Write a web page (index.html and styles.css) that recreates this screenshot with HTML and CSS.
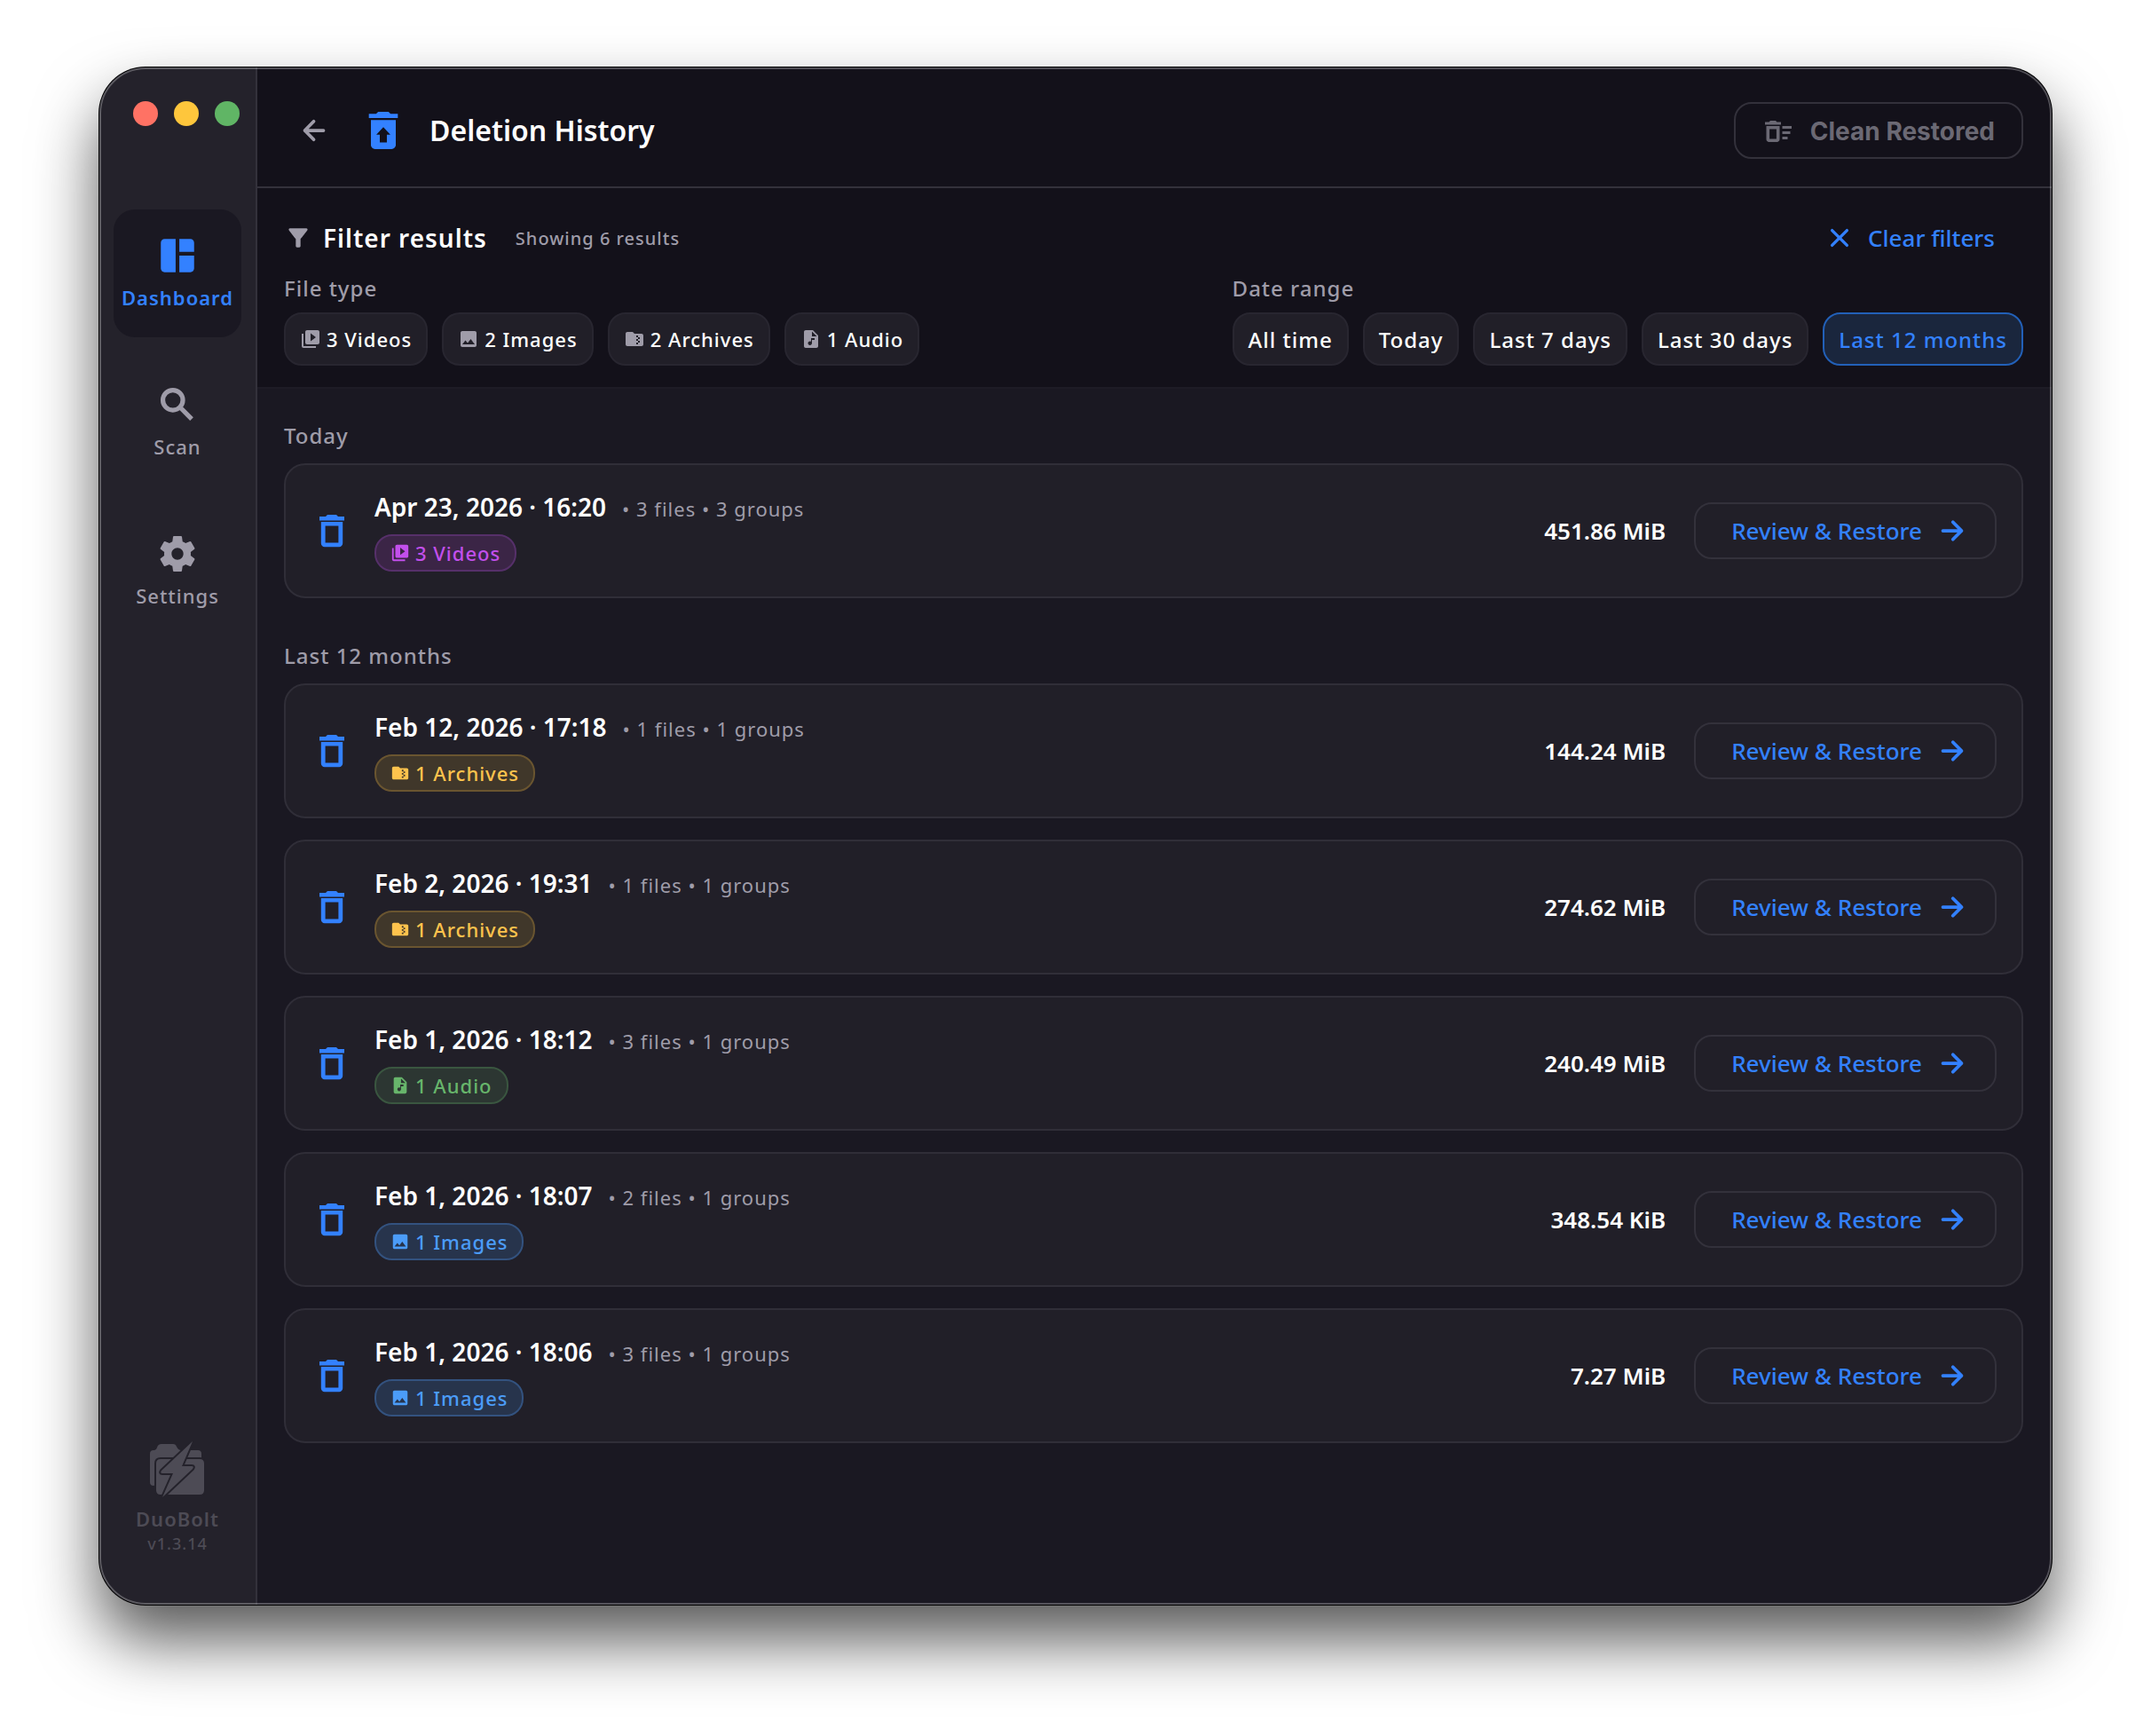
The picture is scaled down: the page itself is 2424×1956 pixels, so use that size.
FILE: index.html
```html
<!DOCTYPE html>
<html lang="en">
<head>
<meta charset="utf-8">
<title>DuoBolt – Deletion History</title>
<link rel="stylesheet" href="styles.css">
</head>
<body>
<svg class="sprite" aria-hidden="true">
  <symbol id="i-dashboard" viewBox="0 0 24 24"><path d="M11 21H5c-1.1 0-2-.9-2-2V5c0-1.1.9-2 2-2h6v18zm2 0h6c1.1 0 2-.9 2-2v-7h-8v9zm8-11V5c0-1.1-.9-2-2-2h-6v7h8z"/></symbol>
  <symbol id="i-search" viewBox="0 0 24 24"><g fill="none" stroke="currentColor" stroke-width="2.5"><circle cx="9.500" cy="9.500" r="5.400"/><path d="M13.800 13.800l5.900 5.900"/></g></symbol>
  <symbol id="i-settings" viewBox="0 0 24 24"><path d="M19.14 12.94c.04-.3.06-.61.06-.94 0-.32-.02-.64-.07-.94l2.03-1.58c.18-.14.23-.41.12-.61l-1.92-3.32c-.12-.22-.37-.29-.59-.22l-2.39.96c-.5-.38-1.03-.7-1.62-.94l-.36-2.54c-.04-.24-.24-.41-.48-.41h-3.84c-.24 0-.43.17-.47.41l-.36 2.54c-.59.24-1.13.57-1.62.94l-2.39-.96c-.22-.08-.47 0-.59.22L2.74 8.87c-.12.21-.08.47.12.61l2.03 1.58c-.05.3-.09.63-.09.94s.02.64.07.94l-2.03 1.58c-.18.14-.23.41-.12.61l1.92 3.32c.12.22.37.29.59.22l2.39-.96c.5.38 1.03.7 1.62.94l.36 2.54c.05.24.24.41.48.41h3.84c.24 0 .44-.17.47-.41l.36-2.54c.59-.24 1.13-.56 1.62-.94l2.39.96c.22.08.47 0 .59-.22l1.92-3.32c.12-.22.07-.47-.12-.61l-2.01-1.58zM12 15.2c-1.77 0-3.2-1.43-3.2-3.2s1.43-3.2 3.2-3.2 3.2 1.43 3.2 3.2-1.43 3.2-3.2 3.2z"/></symbol>
  <symbol id="i-trash" viewBox="0 0 24 24"><path d="M15.700 9.300v9.400H8.300V9.300h7.400M14.500 3h-5l-1 1H5v2.200h14V4h-3.500l-1-1zM18.100 7H5.900v12.100c0 1.1.9 2 2 2h8.200c1.1 0 2-.9 2-2V7z"/></symbol>
  <symbol id="i-restore" viewBox="0 0 24 24"><path d="M19 4h-3.500l-1-1h-5l-1 1H5v2h14V4zM6 7v12c0 1.1.9 2 2 2h8c1.1 0 2-.9 2-2V7H6zm7.700 7v3.800h-3.400V14H8.600l3.400-3.600 3.400 3.600h-1.700z"/></symbol>
  <symbol id="i-sweep" viewBox="0 0 24 24"><path d="M15 16h4v2h-4zm0-8h7v2h-7zm0 4h6v2h-6zM3 18c0 1.1.9 2 2 2h6c1.1 0 2-.9 2-2V8H3v10zm2.400-7.600h5.200v7.200H5.400v-7.200zM10 4H6L5 5H2v2h12V5h-3z"/></symbol>
  <symbol id="i-filter" viewBox="0 0 24 24"><path d="M4.25 5.61C6.27 8.2 10 13 10 13v6c0 .55.45 1 1 1h2c.55 0 1-.45 1-1v-6s3.72-4.8 5.74-7.39A.998.998 0 0 0 18.95 4H5.04c-.83 0-1.3.95-.79 1.61z"/></symbol>
  <symbol id="i-video" viewBox="0 0 24 24"><path d="M4 6H2v14c0 1.1.9 2 2 2h14v-2H4V6zm16-4H8c-1.1 0-2 .9-2 2v12c0 1.1.9 2 2 2h12c1.1 0 2-.9 2-2V4c0-1.1-.9-2-2-2zm-8 12.5v-9l6 4.5-6 4.5z"/></symbol>
  <symbol id="i-image" viewBox="0 0 24 24"><path d="M21 19V5c0-1.1-.9-2-2-2H5c-1.1 0-2 .9-2 2v14c0 1.1.9 2 2 2h14c1.1 0 2-.9 2-2zM8.5 13.5l2.5 3.01L14.5 12l4.5 6H5l3.5-4.5z"/></symbol>
  <symbol id="i-archive" viewBox="0 0 24 24"><path d="M20 6h-8l-2-2H4c-1.1 0-1.99.9-1.99 2L2 18c0 1.1.9 2 2 2h16c1.1 0 2-.9 2-2V8c0-1.1-.9-2-2-2zm-2 6h-2v2h2v2h-2v2h-2v-2h2v-2h-2v-2h2v-2h-2V8h2v2h2v2z"/></symbol>
  <symbol id="i-audio" viewBox="0 0 24 24"><path d="M14 2H6c-1.1 0-1.99.9-1.99 2L4 20c0 1.1.89 2 1.99 2H18c1.1 0 2-.9 2-2V8l-6-6zm2 11h-3v3.75c0 1.24-1.01 2.25-2.25 2.25S8.5 17.99 8.5 16.75s1.01-2.25 2.25-2.25c.46 0 .89.14 1.25.38V11h4v2zm-3-4V3.5L18.5 9H13z"/></symbol>
  <symbol id="i-back" viewBox="0 0 24 24"><path d="M19 12H5M11.700 5.200L5 12l6.700 6.800" fill="none" stroke="currentColor" stroke-width="2.500" stroke-linecap="round" stroke-linejoin="round"/></symbol>
  <symbol id="i-forward" viewBox="0 0 24 24"><path d="M5 12h14M12.500 5.500L19 12l-6.500 6.500" fill="none" stroke="currentColor" stroke-width="2.500" stroke-linecap="round" stroke-linejoin="round"/></symbol>
  <symbol id="i-close" viewBox="0 0 24 24"><path d="M6.400 6.400l11.200 11.200M17.600 6.400L6.400 17.600" fill="none" stroke="currentColor" stroke-width="2.200" stroke-linecap="round"/></symbol>
</svg>

<div class="window">
  <aside class="sidebar">
    <div class="lights" aria-hidden="true">
      <span class="light light-close"></span>
      <span class="light light-min"></span>
      <span class="light light-max"></span>
    </div>
    <nav class="nav" aria-label="Main">
      <a class="nav-item is-active" href="#dashboard" aria-current="page"><svg class="icon icon-nav"><use href="#i-dashboard"/></svg>Dashboard</a>
      <a class="nav-item" href="#scan"><svg class="icon icon-nav"><use href="#i-search"/></svg>Scan</a>
      <a class="nav-item" href="#settings"><svg class="icon icon-nav"><use href="#i-settings"/></svg>Settings</a>
    </nav>
    <div class="brand">
      <svg class="brand-logo" viewBox="0 0 62 64" aria-hidden="true">
        <path d="M0 46V14q0-4 4-4h1q2 0 3-3 1-4 5-4h13q3 0 4 3 2 4 5 4h19q4 0 4 4v10H6v24q0 2-2 2-4 0-4-4z"/>
        <path class="brand-cut" d="M12 20h44q5 0 5 5v30q0 5-5 5H12q-5 0-5-5V25q0-5 5-5z"/>
        <path class="brand-cut" d="M48 0L13 33q-2 3 1 3h12L14 63L48 31q2-3-1-3H36z"/>
      </svg>
      <span class="brand-name">DuoBolt</span>
      <span class="brand-version">v1.3.14</span>
    </div>
  </aside>

  <main class="main">
    <header class="header">
      <button class="back" type="button" aria-label="Back"><svg class="icon icon-action"><use href="#i-back"/></svg></button>
      <svg class="icon icon-title"><use href="#i-restore"/></svg>
      <h1 class="title">Deletion History</h1>
      <button class="button button-clean" type="button" disabled><svg class="icon icon-action"><use href="#i-sweep"/></svg>Clean Restored</button>
    </header>

    <section class="filters">
      <div class="filters-head">
        <svg class="icon icon-filter"><use href="#i-filter"/></svg>
        <h2 class="filters-title">Filter results</h2>
        <span class="filters-count">Showing 6 results</span>
        <button class="clear" type="button"><svg class="icon icon-action"><use href="#i-close"/></svg>Clear filters</button>
      </div>
      <div class="filters-body">
        <div class="filter-group">
          <h3 class="label">File type</h3>
          <div class="chips">
            <button class="chip chip-type" type="button"><svg class="icon icon-chip"><use href="#i-video"/></svg>3 Videos</button>
            <button class="chip chip-type" type="button"><svg class="icon icon-chip"><use href="#i-image"/></svg>2 Images</button>
            <button class="chip chip-type" type="button"><svg class="icon icon-chip"><use href="#i-archive"/></svg>2 Archives</button>
            <button class="chip chip-type" type="button"><svg class="icon icon-chip"><use href="#i-audio"/></svg>1 Audio</button>
          </div>
        </div>
        <div class="filter-group">
          <h3 class="label">Date range</h3>
          <div class="chips">
            <button class="chip" type="button">All time</button>
            <button class="chip" type="button">Today</button>
            <button class="chip" type="button">Last 7 days</button>
            <button class="chip" type="button">Last 30 days</button>
            <button class="chip is-selected" type="button" aria-pressed="true">Last 12 months</button>
          </div>
        </div>
      </div>
    </section>

    <div class="history">
      <section class="period">
        <h2 class="label">Today</h2>
        <div class="cards">
          <article class="card">
            <svg class="icon icon-card"><use href="#i-trash"/></svg>
            <div class="card-info">
              <div class="card-line"><h3 class="card-date">Apr 23, 2026 · 16:20</h3><span class="card-meta">• 3 files • 3 groups</span></div>
              <span class="tag tag-video"><svg class="icon icon-tag"><use href="#i-video"/></svg>3 Videos</span>
            </div>
            <span class="card-size">451.86 MiB</span>
            <button class="button button-review" type="button">Review &amp; Restore<svg class="icon icon-action"><use href="#i-forward"/></svg></button>
          </article>
        </div>
      </section>

      <section class="period">
        <h2 class="label">Last 12 months</h2>
        <div class="cards">
          <article class="card">
            <svg class="icon icon-card"><use href="#i-trash"/></svg>
            <div class="card-info">
              <div class="card-line"><h3 class="card-date">Feb 12, 2026 · 17:18</h3><span class="card-meta">• 1 files • 1 groups</span></div>
              <span class="tag tag-archive"><svg class="icon icon-tag"><use href="#i-archive"/></svg>1 Archives</span>
            </div>
            <span class="card-size">144.24 MiB</span>
            <button class="button button-review" type="button">Review &amp; Restore<svg class="icon icon-action"><use href="#i-forward"/></svg></button>
          </article>
          <article class="card">
            <svg class="icon icon-card"><use href="#i-trash"/></svg>
            <div class="card-info">
              <div class="card-line"><h3 class="card-date">Feb 2, 2026 · 19:31</h3><span class="card-meta">• 1 files • 1 groups</span></div>
              <span class="tag tag-archive"><svg class="icon icon-tag"><use href="#i-archive"/></svg>1 Archives</span>
            </div>
            <span class="card-size">274.62 MiB</span>
            <button class="button button-review" type="button">Review &amp; Restore<svg class="icon icon-action"><use href="#i-forward"/></svg></button>
          </article>
          <article class="card">
            <svg class="icon icon-card"><use href="#i-trash"/></svg>
            <div class="card-info">
              <div class="card-line"><h3 class="card-date">Feb 1, 2026 · 18:12</h3><span class="card-meta">• 3 files • 1 groups</span></div>
              <span class="tag tag-audio"><svg class="icon icon-tag"><use href="#i-audio"/></svg>1 Audio</span>
            </div>
            <span class="card-size">240.49 MiB</span>
            <button class="button button-review" type="button">Review &amp; Restore<svg class="icon icon-action"><use href="#i-forward"/></svg></button>
          </article>
          <article class="card">
            <svg class="icon icon-card"><use href="#i-trash"/></svg>
            <div class="card-info">
              <div class="card-line"><h3 class="card-date">Feb 1, 2026 · 18:07</h3><span class="card-meta">• 2 files • 1 groups</span></div>
              <span class="tag tag-image"><svg class="icon icon-tag"><use href="#i-image"/></svg>1 Images</span>
            </div>
            <span class="card-size">348.54 KiB</span>
            <button class="button button-review" type="button">Review &amp; Restore<svg class="icon icon-action"><use href="#i-forward"/></svg></button>
          </article>
          <article class="card">
            <svg class="icon icon-card"><use href="#i-trash"/></svg>
            <div class="card-info">
              <div class="card-line"><h3 class="card-date">Feb 1, 2026 · 18:06</h3><span class="card-meta">• 3 files • 1 groups</span></div>
              <span class="tag tag-image"><svg class="icon icon-tag"><use href="#i-image"/></svg>1 Images</span>
            </div>
            <span class="card-size">7.27 MiB</span>
            <button class="button button-review" type="button">Review &amp; Restore<svg class="icon icon-action"><use href="#i-forward"/></svg></button>
          </article>
        </div>
      </section>
    </div>
  </main>
</div>
</body>
</html>
```

FILE: styles.css
```css
:root {
  --accent: #3381ff;
  --muted: #9f9ca9;
  --line: #33313b;
  --surface: #211f28;
  --tracking: 1px;
}

* {
  box-sizing: border-box;
}

body {
  margin: 0;
  padding: 76px 112px 148px;
  background: #fff;
  color: #fff;
  font-family: "Noto Sans", "Open Sans", sans-serif;
  font-size: 24px;
}

h1, h2, h3 {
  margin: 0;
}

button {
  margin: 0;
  padding: 0;
  border: 0;
  background: none;
  color: inherit;
  font: inherit;
  white-space: nowrap;
}

.sprite {
  display: none;
}

.icon {
  flex: none;
  fill: currentColor;
}

.icon-nav {
  width: 50px;
  height: 50px;
}

.icon-card {
  width: 48px;
  height: 48px;
  color: var(--accent);
}

.icon-title {
  width: 56px;
  height: 56px;
  margin: 0 24px 0 32px;
  color: var(--accent);
}

.icon-action {
  width: 36px;
  height: 36px;
}

.icon-filter {
  width: 32px;
  height: 32px;
  color: var(--muted);
}

.icon-chip {
  width: 24px;
  height: 24px;
  color: var(--muted);
}

.icon-tag {
  width: 22px;
  height: 22px;
}

/* Window frame */
.window {
  position: relative;
  display: flex;
  min-height: calc(100vh - 224px);
  border-radius: 52px;
  overflow: hidden;
  background: #1a1822;
  box-shadow: 0 0 0 1px #000, 0 40px 72px rgba(0, 0, 0, 0.66);
}

.window::after {
  content: "";
  position: absolute;
  inset: 0;
  border: 2px solid rgba(255, 255, 255, 0.26);
  border-radius: inherit;
  pointer-events: none;
}

/* Sidebar */
.sidebar {
  display: flex;
  flex: none;
  flex-direction: column;
  width: 178px;
  padding: 38px 16px 56px;
  border-right: 2px solid var(--line);
  background: #24222b;
}

.lights {
  display: flex;
  gap: 18px;
  padding-left: 22px;
}

.light {
  flex: none;
  width: 28px;
  height: 28px;
  border-radius: 50%;
}

.light-close { background: #ff7264; }
.light-min { background: #fec63c; }
.light-max { background: #60b565; }

.nav {
  display: flex;
  flex-direction: column;
  gap: 24px;
  margin-top: 94px;
}

.nav-item {
  display: flex;
  flex-direction: column;
  align-items: center;
  gap: 6px;
  height: 144px;
  padding-top: 27px;
  border-radius: 24px;
  color: var(--muted);
  font-size: 22px;
  font-weight: 500;
  line-height: 32px;
  letter-spacing: var(--tracking);
  text-decoration: none;
}

.nav-item.is-active {
  background: #1a1822;
  color: var(--accent);
  font-weight: 600;
}

.brand {
  display: flex;
  flex-direction: column;
  align-items: center;
  margin-top: auto;
  color: #4d4b55;
  letter-spacing: var(--tracking);
}

.brand-logo {
  width: 62px;
  height: 64px;
  margin-bottom: 8px;
  fill: currentColor;
}

.brand-cut {
  stroke: #24222b;
  stroke-width: 4;
  paint-order: stroke;
}

.brand-name {
  font-size: 22px;
  font-weight: 600;
  line-height: 30px;
}

.brand-version {
  font-size: 18px;
  font-weight: 500;
  line-height: 26px;
}

/* Header */
.main {
  flex: 1;
  min-width: 0;
}

.header {
  display: flex;
  align-items: center;
  height: 136px;
  padding: 8px 32px 0 46px;
  border-bottom: 2px solid var(--line);
  background: #13111a;
}

.back {
  display: flex;
  color: var(--muted);
}

.title {
  font-size: 32px;
  font-weight: 600;
  line-height: 44px;
}

.button {
  display: flex;
  align-items: center;
  height: 64px;
  border: 2px solid var(--line);
  border-radius: 20px;
}

.button-clean {
  gap: 18px;
  margin-left: auto;
  padding: 2px 30px 0;
  color: #6b6974;
  font-family: Inter, sans-serif;
  font-size: 28px;
  font-weight: 700;
}

.button-review {
  gap: 16px;
  padding: 0 30px 0 40px;
  color: var(--accent);
  font-size: 26px;
  font-weight: 500;
}

/* Filters */
.filters {
  padding: 36px 32px 24px 30px;
  border-bottom: 2px solid #1e1c26;
  background: #13111a;
}

.filters-head {
  display: flex;
  align-items: center;
  height: 40px;
}

.filters-title {
  margin-left: 12px;
  font-size: 28px;
  font-weight: 600;
  line-height: 40px;
  letter-spacing: var(--tracking);
}

.filters-count {
  margin-left: 32px;
  color: var(--muted);
  font-size: 20px;
  font-weight: 500;
  letter-spacing: var(--tracking);
}

.clear {
  display: flex;
  align-items: center;
  gap: 14px;
  margin-left: auto;
  padding-right: 32px;
  color: var(--accent);
  font-size: 26px;
  font-weight: 500;
}

.filters-body {
  display: flex;
  justify-content: space-between;
  margin-top: 20px;
}

.label {
  color: var(--muted);
  font-size: 24px;
  font-weight: 500;
  line-height: 34px;
  letter-spacing: var(--tracking);
}

.chips {
  display: flex;
  gap: 16px;
  margin-top: 10px;
}

.chip {
  display: flex;
  align-items: center;
  gap: 6px;
  height: 60px;
  padding: 0 16px;
  border: 2px solid #282630;
  border-radius: 20px;
  background: var(--surface);
  font-size: 24px;
  font-weight: 500;
  letter-spacing: var(--tracking);
}

.chip-type {
  font-size: 22px;
}

.chip.is-selected {
  border-color: #2260b8;
  background: #1a263d;
  color: var(--accent);
}

/* History */
.history {
  display: flex;
  flex-direction: column;
  gap: 48px;
  padding: 36px 32px 48px 30px;
}

.cards {
  display: flex;
  flex-direction: column;
  gap: 24px;
  margin-top: 14px;
}

.card {
  display: flex;
  align-items: center;
  padding: 28px;
  border: 2px solid #302e38;
  border-radius: 24px;
  background: var(--surface);
}

.card-info {
  display: flex;
  flex: 1;
  flex-direction: column;
  align-items: flex-start;
  gap: 12px;
  margin-left: 24px;
}

.card-line {
  display: flex;
  align-items: baseline;
  gap: 18px;
  height: 38px;
}

.card-date {
  font-size: 28px;
  font-weight: 600;
  line-height: 38px;
}

.card-meta {
  color: var(--muted);
  font-size: 22px;
  letter-spacing: var(--tracking);
}

.card-size {
  margin-right: 32px;
  font-size: 26px;
  font-weight: 600;
}

.tag {
  display: flex;
  align-items: center;
  gap: 6px;
  height: 42px;
  padding: 0 16px;
  border: 2px solid;
  border-radius: 20px;
  font-size: 22px;
  font-weight: 500;
  letter-spacing: var(--tracking);
}

.tag-video {
  border-color: #56306a;
  background: #3b2546;
  color: #c24fec;
}

.tag-archive {
  border-color: #6a5530;
  background: #40372a;
  color: #fec34d;
}

.tag-audio {
  border-color: #3a5640;
  background: #2c3632;
  color: #67b56b;
}

.tag-image {
  border-color: #33527f;
  background: #27344c;
  color: #4b9cf8;
}
```
